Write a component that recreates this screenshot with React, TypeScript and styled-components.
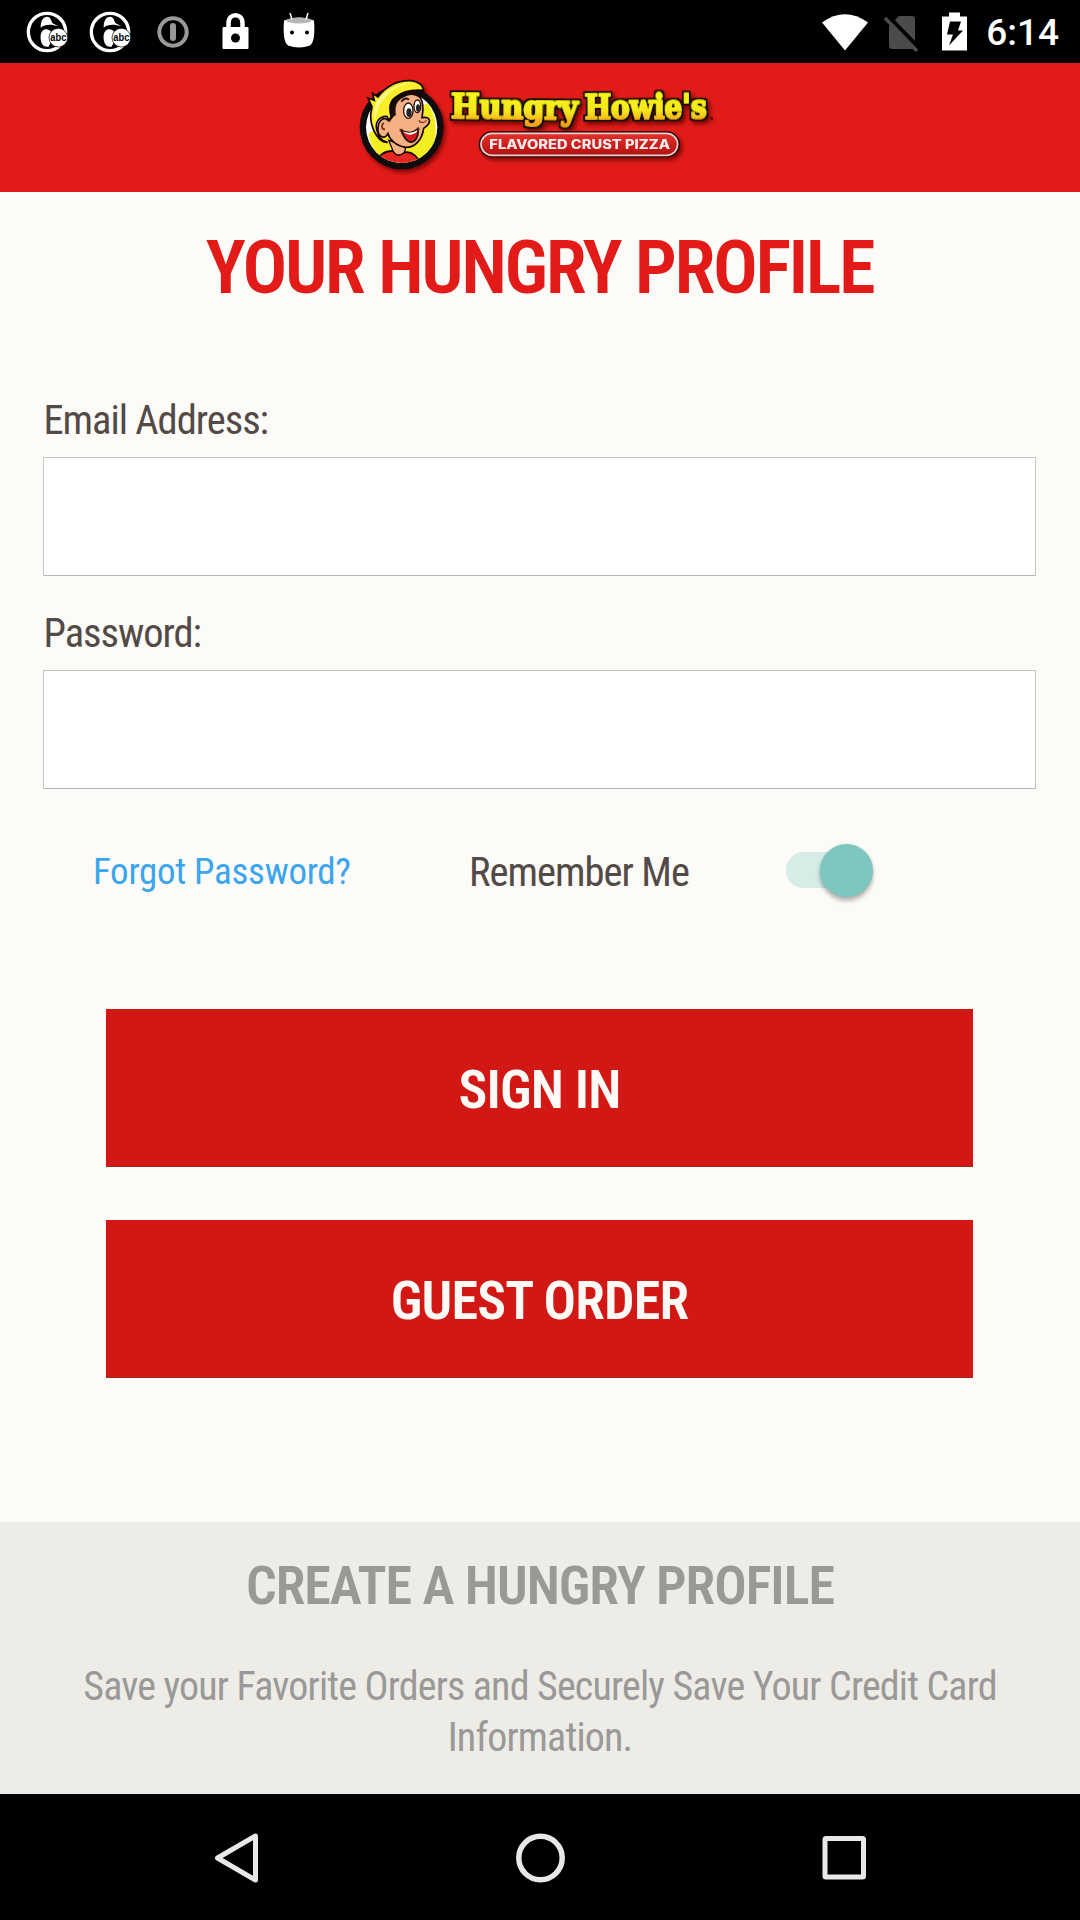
import React from "react";
import styled, { createGlobalStyle } from "styled-components";

const GlobalStyle = createGlobalStyle`
  *, *::before, *::after { box-sizing: border-box; }
  body { margin: 0; background: #fcfbf7; }
`;

const Screen = styled.div`
  width: 1080px;
  height: 1920px;
  display: flex;
  flex-direction: column;
  overflow: hidden;
  background: #fcfbf7;
  font-family: "Roboto Condensed", Roboto, sans-serif;
  font-stretch: 75%;
  color: #524a46;
`;

const StatusBar = styled.header`
  height: 63px;
  flex: none;
  display: flex;
  align-items: center;
  justify-content: space-between;
  padding: 0 21px 0 26px;
  background: #000;
`;

const IconGroup = styled.div<{ $gap: number }>`
  display: flex;
  align-items: center;
  gap: ${(p) => p.$gap}px;
`;

const Glyph = styled.svg`
  display: block;
  flex: none;
`;

const Clock = styled.span`
  margin-left: -5px;
  font-family: Roboto, sans-serif;
  font-stretch: 100%;
  font-size: 37px;
  font-weight: 500;
  line-height: 64px;
  padding-top: 2px;
  color: #fff;
`;

const BrandBar = styled.div`
  height: 129px;
  flex: none;
  display: flex;
  justify-content: center;
  padding-top: 7px;
  padding-right: 10px;
  background: #e21b18;
`;

const Content = styled.main`
  flex: 1;
  display: flex;
  flex-direction: column;
  padding: 0 44px 0 43px;
`;

const Title = styled.h1`
  margin: 32px 0 0;
  height: 88px;
  text-align: center;
  font-size: 74.5px;
  font-weight: 600;
  line-height: 88px;
  letter-spacing: -2.45px;
  color: #e21b18;
`;

const Form = styled.form`
  display: flex;
  flex-direction: column;
  margin-top: 82px;
`;

const Field = styled.label`
  display: flex;
  flex-direction: column;
  height: 213px;
  font-size: 40.5px;
  line-height: 52px;
  letter-spacing: -1.02px;
  text-indent: 0.5px;
`;

const Input = styled.input`
  width: 993px;
  height: 119px;
  margin: 11px 0 0;
  border: 1px solid #c4c4c2;
  border-bottom-color: #b4b4b3;
  border-radius: 1px;
  background: #fff;
  outline: none;
`;

const Options = styled.div`
  display: grid;
  grid-template-columns: 376px 317px auto;
  align-items: center;
  height: 54px;
  margin-top: 23px;
  padding-left: 50px;
`;

const ForgotLink = styled.a`
  padding-top: 4px;
  font-size: 37px;
  line-height: 50px;
  letter-spacing: -0.3px;
  color: #3ba5ee;
`;

const RememberLabel = styled.span`
  padding-top: 4px;
  font-size: 40.5px;
  line-height: 50px;
  letter-spacing: -0.97px;
`;

const Track = styled.span`
  display: flex;
  align-items: center;
  width: 80px;
  height: 36px;
  border-radius: 18px;
  background: #d6ece6;
`;

const Thumb = styled.span`
  flex: none;
  width: 53px;
  height: 53px;
  margin-left: 34px;
  border-radius: 50%;
  background: #7cc7c0;
  box-shadow: 0 4px 4px rgba(0, 0, 0, 0.27), 0 0 3px rgba(0, 0, 0, 0.1);
`;

const Actions = styled.div`
  display: flex;
  flex-direction: column;
  gap: 53px;
  margin: 112px 63px 0 63px;
`;

const ActionButton = styled.button`
  height: 158px;
  padding: 4px 0 0;
  border: 0;
  border-bottom: 1px solid #a52320;
  background: #d11814;
  color: #fffaf5;
  font-family: inherit;
  font-stretch: inherit;
  font-size: 54px;
  font-weight: 600;
  letter-spacing: -0.85px;
`;

const Promo = styled.section`
  height: 272px;
  flex: none;
  padding-top: 31px;
  text-align: center;
  background: #edece7;
  color: #9a9997;
`;

const PromoTitle = styled.h2`
  margin: 0;
  font-size: 54px;
  font-weight: 600;
  line-height: 66px;
  letter-spacing: -1.05px;
`;

const PromoText = styled.p`
  margin: 42px 60px 0;
  font-size: 40px;
  line-height: 51px;
  letter-spacing: -0.83px;
`;

const NavBar = styled.nav`
  height: 126px;
  flex: none;
  display: flex;
  align-items: center;
  justify-content: space-between;
  padding: 1px 210px 0 212px;
  background: #000;
`;

function SixAbc() {
  return (
    <Glyph width="42" height="42" viewBox="0 0 126 126">
      <circle cx="63" cy="63" r="56" fill="#000" stroke="#fff" strokeWidth="10" />
      <path d="M44 50C44 27 52 17 63 17C75 17 76 32 80 37L97 46C76 39 57 39 44 50Z" fill="#fff" />
      <path d="M55 106C42 97 40 68 50 59C58 52 70 54 75 62L70 80L74 96L67 108Z" fill="#fff" />
      <circle cx="97" cy="80" r="28" fill="#fff" stroke="#000" strokeWidth="2" />
      <text x="73" y="89" fontFamily="Liberation Sans, sans-serif" fontSize="30" fontWeight="700" textLength="48" lengthAdjust="spacingAndGlyphs" fill="#000">abc</text>
    </Glyph>
  );
}

const wordStyle = {
  fontFamily: '"DejaVu Serif", serif',
  fontWeight: 700,
  fontSize: 98,
  lengthAdjust: "spacingAndGlyphs" as const,
  strokeLinejoin: "round" as const,
};

function BrandWord({ x, y, length, angle, children }: { x: number; y: number; length: number; angle: number; children: string }) {
  return (
    <text
      {...wordStyle}
      x={x}
      y={y}
      textLength={length}
      transform={`rotate(${angle} ${x} ${y})`}
      stroke="url(#gold)"
      strokeWidth={5}
      fill="url(#gold)"
      filter="url(#outline)"
    >
      {children}
    </text>
  );
}

function BrandLogo() {
  return (
    <Glyph width="370" height="112" viewBox="0 0 1110 336">
      <defs>
        <linearGradient id="gold" x1="0" y1="0" x2="0" y2="1">
          <stop offset="0.25" stopColor="#f8f31a" />
          <stop offset="0.6" stopColor="#f6e71a" />
          <stop offset="0.9" stopColor="#f5a11d" />
        </linearGradient>
        <linearGradient id="pill" x1="0" y1="0" x2="0" y2="1">
          <stop offset="0" stopColor="#e5312c" />
          <stop offset="1" stopColor="#b3110f" />
        </linearGradient>
        <filter id="outline" x="-10%" y="-20%" width="120%" height="140%">
          <feMorphology in="SourceAlpha" operator="dilate" radius="6" result="fat" />
          <feFlood floodColor="#171000" />
          <feComposite in2="fat" operator="in" result="edge" />
          <feMerge>
            <feMergeNode in="edge" />
            <feMergeNode in="SourceGraphic" />
          </feMerge>
        </filter>
        <filter id="soft" x="-20%" y="-20%" width="150%" height="150%">
          <feDropShadow dx="7" dy="9" stdDeviation="7" floodColor="#5b0000" floodOpacity="0.75" />
        </filter>
        <clipPath id="disc"><circle cx="155" cy="172" r="107" /></clipPath>
      </defs>

      <g filter="url(#soft)">
        <circle cx="155" cy="172" r="126" fill="#080808" />
        <circle cx="155" cy="172" r="107" fill="#fff" />
        <g clipPath="url(#disc)">
          <path d="M56 190L232 100C264 140 266 208 236 252L178 286L100 272C74 250 60 222 56 190Z" fill="#f4ed24" />
          <path d="M76 290C83 254 106 241 134 243L161 248C184 241 210 262 212 292Z" fill="#e52620" stroke="#160400" strokeWidth="5" />
        </g>
        <path d="M116 211L130 245C141 263 163 254 166 239L164 227Z" fill="#f5b183" stroke="#160400" strokeWidth="4" />
        <path d="M122 95C147 67 190 66 210 82C222 98 220 121 216 143C237 139 245 151 232 166L221 175C216 211 194 232 169 232C139 229 119 209 114 191C102 211 82 199 84 174C85 151 101 139 114 151Z" fill="#f5b183" stroke="#160400" strokeWidth="5" />
        <path d="M120 150C112 116 120 84 150 66C176 54 205 60 214 78C196 72 176 72 158 84C138 94 134 112 138 136C130 136 126 152 120 150Z" fill="#160802" />
        <path d="M66 110L54 84L73 91L68 70L84 81C109 46 147 30 182 32C204 34 220 45 220 61C180 58 155 66 136 82C122 92 116 112 123 138L119 152L110 139C86 139 73 158 82 185C88 207 101 215 113 217C85 219 61 174 62 134Z" fill="#f8ef2a" stroke="#160400" strokeWidth="5" />
        <path d="M83 91C114 54 148 40 188 40C154 45 119 58 104 85C88 95 77 130 78 150C68 139 72 112 83 91Z" fill="#fffb90" />
        <path d="M105 178C94 178 93 164 102 159" fill="none" stroke="#703519" strokeWidth="5" />
        <ellipse cx="175" cy="122" rx="14" ry="23" fill="#fff" stroke="#241008" strokeWidth="4" />
        <ellipse cx="202" cy="109" rx="10" ry="19" fill="#fff" stroke="#241008" strokeWidth="4" />
        <ellipse cx="177" cy="128" rx="8" ry="13" fill="#222" />
        <ellipse cx="204" cy="114" rx="6" ry="11" fill="#222" />
        <path d="M154 95C162 84 171 83 177 89" fill="none" stroke="#241008" strokeWidth="6" />
        <path d="M153 181C174 192 193 187 204 176C206 204 195 218 179 216C166 211 160 199 153 181Z" fill="#d5161c" stroke="#1b0807" strokeWidth="5" />
        <path d="M158 184C176 192 193 187 202 179L200 187C184 198 171 196 158 184Z" fill="#fff" />
        <path d="M207 151C210 159 221 161 230 151M149 184L157 176M203 172L209 179" fill="none" stroke="#7d3518" strokeWidth="4" />
      </g>

      <g filter="url(#soft)">
        <BrandWord x={303} y={145} length={380} angle={0.7}>Hungry</BrandWord>
        <BrandWord x={704} y={146} length={366} angle={-0.3}>Howie's</BrandWord>
        <circle cx="1085" cy="146" r="4" fill="#3e0705" />
      </g>

      <g filter="url(#soft)">
        <rect x="386" y="184" width="604" height="78" rx="39" fill="#200504" />
        <rect x="393" y="190" width="590" height="66" rx="33" fill="url(#pill)" stroke="#e8d0d0" strokeWidth="5" />
        <text x="418" y="236" fontFamily="Inter, sans-serif" fontSize="38" fontWeight="800" textLength="542" lengthAdjust="spacingAndGlyphs" fill="#f4ecec">FLAVORED CRUST PIZZA</text>
      </g>
    </Glyph>
  );
}

export default function App() {
  return (
    <>
      <GlobalStyle />
      <Screen>
        <StatusBar>
          <IconGroup $gap={21}>
            <SixAbc />
            <SixAbc />
            <Glyph width="42" height="32" viewBox="-5 0 42 32">
              <circle cx="16" cy="16" r="13.7" fill="none" stroke="#999" strokeWidth="4" />
              <path d="M16 10V22" stroke="#999" strokeWidth="6" strokeLinecap="round" />
            </Glyph>
            <Glyph width="41" height="40" viewBox="3.5 1 41 40">
              <path d="M17 18V12C17 1.5 31 1.5 31 12V18" fill="none" stroke="#fff" strokeWidth="4.5" />
              <rect x="11" y="16" width="26" height="22" rx="1" fill="#fff" />
              <circle cx="24" cy="27" r="4.5" fill="#000" />
            </Glyph>
            <Glyph width="44" height="38" viewBox="-7 1.5 44 38">
              <path d="M0 9Q15 3 30 9C31 22 30 31 26 34Q15 38 4 34C0 31-1 22 0 9Z" fill="#fff" />
              <ellipse cx="15" cy="9" rx="12.5" ry="3" fill="#b5b5b5" />
              <path d="M6 1.5L8 8M24 1.5L22 8" stroke="#fff" strokeWidth="1.5" />
              <circle cx="8" cy="21" r="2" fill="#000" />
              <circle cx="23" cy="21" r="2" fill="#000" />
            </Glyph>
          </IconGroup>
          <IconGroup $gap={15}>
            <Glyph width="48" height="40" viewBox="0 0 48 40">
              <path d="M1 10.5Q24-6 47 10.5L24 38.5Z" fill="#fff" />
            </Glyph>
            <Glyph width="35" height="40" viewBox="0 0 35 40">
              <path d="M15 4H28Q31 4 31 7V34Q31 37 28 37H8Q5 37 5 34V14Z" fill="#4b4b4b" />
              <path d="M4 4L36 37" stroke="#000" strokeWidth="4" />
              <path d="M1 6L33 39" stroke="#4b4b4b" strokeWidth="3.5" />
            </Glyph>
            <Glyph width="42" height="40" viewBox="0 0.5 42 40">
              <path d="M15 1H26V5H33V39H8V5H15Z" fill="#fff" />
              <path d="M16 10H27L24 19H29L15 34L19 23H13Z" fill="#000" />
            </Glyph>
            <Clock>6:14</Clock>
          </IconGroup>
        </StatusBar>

        <BrandBar><BrandLogo /></BrandBar>

        <Content>
          <Title>YOUR HUNGRY PROFILE</Title>
          <Form>
            <Field>
              Email Address:
              <Input type="email" />
            </Field>
            <Field>
              Password:
              <Input type="password" />
            </Field>
          </Form>
          <Options>
            <ForgotLink>Forgot Password?</ForgotLink>
            <RememberLabel>Remember Me</RememberLabel>
            <Track><Thumb /></Track>
          </Options>
          <Actions>
            <ActionButton>SIGN IN</ActionButton>
            <ActionButton>GUEST ORDER</ActionButton>
          </Actions>
        </Content>

        <Promo>
          <PromoTitle>CREATE A HUNGRY PROFILE</PromoTitle>
          <PromoText>Save your Favorite Orders and Securely Save Your Credit Card Information.</PromoText>
        </Promo>

        <NavBar>
          <Glyph width="50" height="54" viewBox="0 0 50 54">
            <path d="M43.5 5V49L5.5 27Z" fill="none" stroke="#e8e8e8" strokeWidth="5" strokeLinejoin="round" />
          </Glyph>
          <Glyph width="50" height="50" viewBox="0.5 0 50 50">
            <circle cx="25" cy="25" r="21.7" fill="none" stroke="#e8e8e8" strokeWidth="5.5" />
          </Glyph>
          <Glyph width="50" height="50" viewBox="0 0 50 50">
            <rect x="5" y="5.5" width="38.5" height="38.5" rx="1" fill="none" stroke="#e8e8e8" strokeWidth="5" />
          </Glyph>
        </NavBar>
      </Screen>
    </>
  );
}
